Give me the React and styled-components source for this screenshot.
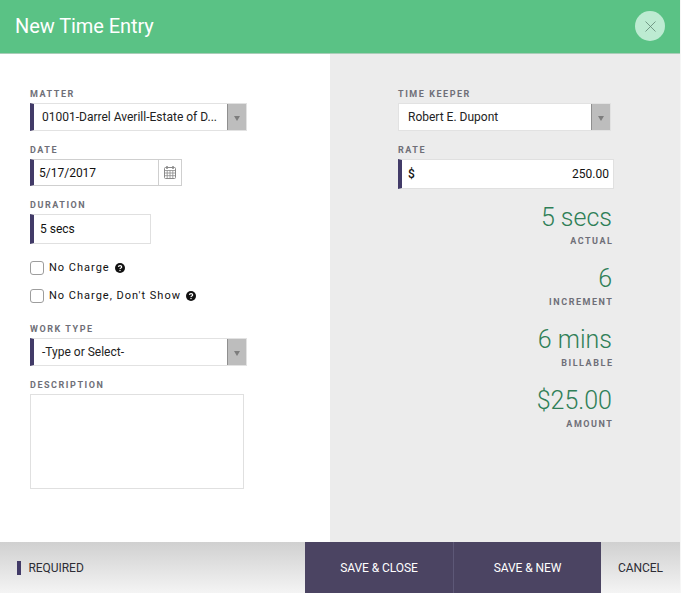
import React from "react";
import styled, { createGlobalStyle } from "styled-components";

const Global = createGlobalStyle`
  html, body { margin: 0; padding: 0; background: #fff; }
  body { font-family: Roboto, "Liberation Sans", sans-serif; }
  * { box-sizing: border-box; }
`;

const Page = styled.div`
  width: 681px;
  height: 593px;
  display: flex;
  flex-direction: column;
  overflow: hidden;
  border-right: 1px solid #f6f6f6;
`;

const Header = styled.header`
  height: 54px;
  flex: none;
  background: #5ac285;
  border-bottom: 1px solid #a9cdb8;
  display: flex;
  align-items: center;
  justify-content: space-between;
  padding: 0 15px;
`;

const Title = styled.h1`
  margin: 0 0 2px;
  font-size: 20px;
  font-weight: 400;
  letter-spacing: -0.07px;
  line-height: 50px;
  color: #fff;
`;

const CloseButton = styled.button`
  width: 30px;
  height: 30px;
  border: 0;
  padding: 0;
  border-radius: 50%;
  background: #bdebd2;
  display: flex;
  align-items: center;
  justify-content: center;
  margin-bottom: 1px;
`;

const Body = styled.main`
  flex: 1;
  display: flex;
  min-height: 0;
`;

const LeftPanel = styled.section`
  width: 330px;
  padding: 34px 0 0 30px;
  background: #fff;
`;

const RightPanel = styled.section`
  flex: 1;
  padding: 34px 0 0 68px;
  background: #ececec;
`;

const Label = styled.label`
  display: block;
  font-size: 9px;
  line-height: 12px;
  height: 12px;
  margin-top: ${(p) => p.$top ?? 0}px;
  margin-bottom: 3px;
  font-weight: 700;
  letter-spacing: 1.55px;
  color: #6f6f78;
  text-transform: uppercase;
`;

const SelectBox = styled.div`
  width: ${(p) => p.$width}px;
  height: 28px;
  display: flex;
  background: #fff;
  border: 1px solid #e2e2e2;
  border-left: ${(p) => (p.$required ? "4px solid #423b68" : "1px solid #e2e2e2")};
`;

const SelectText = styled.span`
  flex: 1;
  min-width: 0;
  padding-left: ${(p) => (p.$plain ? 9 : 8)}px;
  font-size: 12px;
  line-height: 26px;
  color: #222;
  white-space: nowrap;
`;

const SelectArrow = styled.span`
  width: 19px;
  flex: none;
  background: #bdbdbd;
  border-left: 1px solid #8f8f8f;
  display: flex;
  align-items: center;
  justify-content: center;
  &::after {
    content: "";
    border-left: 3.5px solid transparent;
    border-right: 3.5px solid transparent;
    border-top: 5px solid #7d7d7d;
    margin-top: 2px;
  }
`;

const InputBox = styled.div`
  width: ${(p) => p.$width}px;
  height: ${(p) => p.$height}px;
  display: flex;
  align-items: center;
  background: #fff;
  border: 1px solid #e0e0e0;
  border-left: 4px solid #423b68;
  font-size: 12px;
  color: #111;
`;

const DateBox = styled(InputBox)`
  border-color: #cfcfcf;
  border-left-color: #423b68;
`;

const InputText = styled.span`
  flex: 1;
  padding-left: ${(p) => p.$pad}px;
`;

const AddOn = styled.span`
  width: 23px;
  height: 100%;
  flex: none;
  border-left: 1px solid #cfcfcf;
  display: flex;
  align-items: center;
  justify-content: center;
`;

const CheckRow = styled.div`
  display: flex;
  align-items: center;
  height: 14px;
  margin-top: ${(p) => p.$top}px;
`;

const Checkbox = styled.span`
  width: 14px;
  height: 14px;
  flex: none;
  border: 1px solid #9d9d9d;
  border-radius: 3px;
  background: #fff;
`;

const CheckText = styled.span`
  margin-left: 5px;
  font-size: 11px;
  letter-spacing: 1px;
  color: #111;
  white-space: nowrap;
  margin-top: -1px;
`;

const HelpIcon = styled.svg`
  width: 10px;
  height: 10px;
  margin-left: 5px;
  margin-top: -1px;
  flex: none;
`;

const TextArea = styled.div`
  width: 214px;
  height: 95px;
  border: 1px solid #e0e0e0;
  background: #fff;
`;

const RateSymbol = styled.span`
  padding-left: 6px;
  font-weight: 500;
`;

const RateValue = styled.span`
  flex: 1;
  text-align: right;
  padding-right: 4px;
`;

const Stats = styled.div`
  width: 216px;
  margin-top: 14px;
  display: flex;
  flex-direction: column;
  align-items: flex-end;
`;

const StatValue = styled.div`
  font-size: 25px;
  font-weight: 300;
  line-height: 30px;
  color: #2f7f57;
  padding-right: 2px;
`;

const StatLabel = styled.div`
  font-size: 9px;
  font-weight: 700;
  line-height: 12px;
  letter-spacing: 1.55px;
  margin-right: 0.5px;
  margin-top: 2px;
  margin-bottom: 17px;
  color: #6f6f78;
  text-transform: uppercase;
`;

const Footer = styled.footer`
  height: 51px;
  flex: none;
  display: flex;
  align-items: center;
  background: linear-gradient(#d0d0d0, #f4f4f4);
`;

const Required = styled.div`
  flex: 1;
  display: flex;
  align-items: center;
  padding-left: 17px;
  font-size: 12px;
  letter-spacing: -0.05px;
  color: #2d2d35;
  &::before {
    content: "";
    width: 4px;
    height: 14px;
    margin-right: 7.5px;
    background: #423b68;
  }
`;

const SaveButton = styled.button`
  width: ${(p) => p.$width}px;
  height: 100%;
  border: 0;
  border-left: ${(p) => (p.$divider ? "1px solid #5d5877" : "0")};
  background: #4b4462;
  color: #fff;
  font: 400 12px Roboto, sans-serif;
  letter-spacing: -0.08px;
  padding: 0;
`;

const CancelButton = styled.button`
  width: 79px;
  height: 100%;
  border: 0;
  background: transparent;
  color: #2d2d35;
  font: 400 12px Roboto, sans-serif;
  letter-spacing: -0.08px;
  padding: 0;
`;

const Help = () => (
  <HelpIcon viewBox="0 0 10 10">
    <circle cx="5" cy="5" r="5" fill="#111" />
    <path d="M3.4 3.9 C3.5 2.2 6.7 2.2 6.7 3.9 C6.7 5 5 4.9 5 6.1" fill="none" stroke="#fff" strokeWidth="1.2" />
    <rect x="4.4" y="6.9" width="1.2" height="1.2" fill="#fff" />
  </HelpIcon>
);

const Calendar = () => (
  <svg width="12" height="13" viewBox="0 0 12 13" fill="none" stroke="#8a8a8a" strokeWidth="1">
    <rect x="0.5" y="1.5" width="11" height="11" rx="1" />
    <path d="M0.5 4.5H11.5M0.5 7H11.5M0.5 9.7H11.5M3.2 4.5V12.5M6 4.5V12.5M8.8 4.5V12.5" strokeWidth="0.8" />
    <path d="M3 0V3M9 0V3" strokeWidth="1.5" />
  </svg>
);

export default function App() {
  return (
    <Page>
      <Global />
      <Header>
        <Title>New Time Entry</Title>
        <CloseButton aria-label="Close">
          <svg width="11" height="11" viewBox="0 0 11 11" stroke="#5f8573" strokeWidth="0.8" fill="none">
            <path d="M0.5 0.5L10.5 10.5M10.5 0.5L0.5 10.5" />
          </svg>
        </CloseButton>
      </Header>
      <Body>
        <LeftPanel>
          <Label>Matter</Label>
          <SelectBox $width={217} $required>
            <SelectText>01001-Darrel Averill-Estate of D...</SelectText>
            <SelectArrow />
          </SelectBox>
          <Label $top={13}>Date</Label>
          <DateBox $width={152} $height={27}>
            <InputText $pad={5}>5/17/2017</InputText>
            <AddOn><Calendar /></AddOn>
          </DateBox>
          <Label $top={13}>Duration</Label>
          <InputBox $width={121} $height={30}>
            <InputText $pad={6}>5 secs</InputText>
          </InputBox>
          <CheckRow $top={17}>
            <Checkbox />
            <CheckText>No Charge</CheckText>
            <Help />
          </CheckRow>
          <CheckRow $top={14}>
            <Checkbox />
            <CheckText>No Charge, Don't Show</CheckText>
            <Help />
          </CheckRow>
          <Label $top={20}>Work Type</Label>
          <SelectBox $width={217} $required>
            <SelectText>-Type or Select-</SelectText>
            <SelectArrow />
          </SelectBox>
          <Label $top={13}>Description</Label>
          <TextArea />
        </LeftPanel>
        <RightPanel>
          <Label>Time Keeper</Label>
          <SelectBox $width={213}>
            <SelectText $plain>Robert E. Dupont</SelectText>
            <SelectArrow />
          </SelectBox>
          <Label $top={13}>Rate</Label>
          <InputBox $width={216} $height={30}>
            <RateSymbol>$</RateSymbol>
            <RateValue>250.00</RateValue>
          </InputBox>
          <Stats>
            <StatValue>5 secs</StatValue>
            <StatLabel>Actual</StatLabel>
            <StatValue>6</StatValue>
            <StatLabel>Increment</StatLabel>
            <StatValue>6 mins</StatValue>
            <StatLabel>Billable</StatLabel>
            <StatValue>$25.00</StatValue>
            <StatLabel>Amount</StatLabel>
          </Stats>
        </RightPanel>
      </Body>
      <Footer>
        <Required>REQUIRED</Required>
        <SaveButton $width={148}>SAVE &amp; CLOSE</SaveButton>
        <SaveButton $width={148} $divider>SAVE &amp; NEW</SaveButton>
        <CancelButton>CANCEL</CancelButton>
      </Footer>
    </Page>
  );
}
